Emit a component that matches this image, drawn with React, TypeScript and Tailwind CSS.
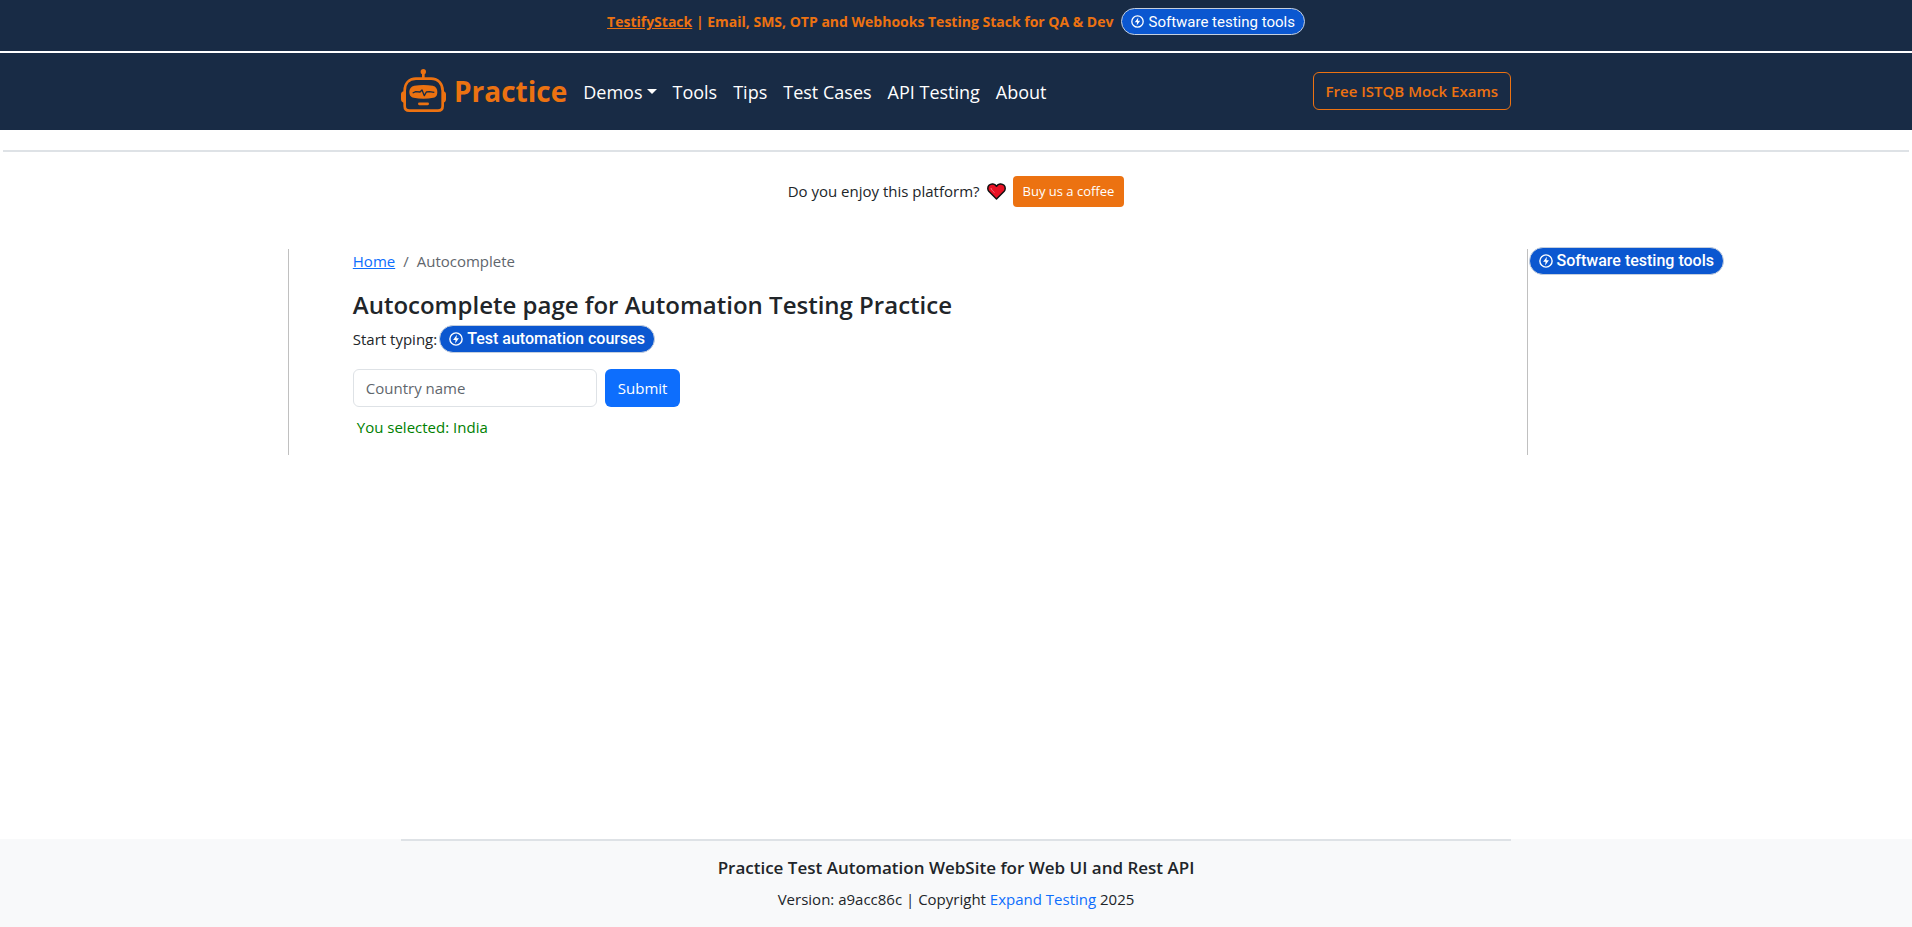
import { useState } from 'react'
import type { FormEvent } from 'react'

const navLinks = ['Tools', 'Tips', 'Test Cases', 'API Testing', 'About']

function BoltIcon({ className }: { className: string }) {
  return (
    <svg viewBox="0 0 24 24" className={className} fill="none" aria-hidden="true">
      <circle cx="12" cy="12" r="10.5" stroke="currentColor" strokeWidth="2.4" />
      <path d="M13.5 4.500 7 13.5h4.200L10.500 19.500 17 10.500h-4.200z" fill="currentColor" />
    </svg>
  )
}

function Pill({ label, large = false }: { label: string; large?: boolean }) {
  return (
    <a
      href="#"
      className={
        large
          ? "inline-flex h-7 items-center gap-1 rounded-full border border-[#c5cfdd] bg-[#0b57d0] px-[9px] font-['Roboto',sans-serif] text-base font-medium whitespace-nowrap text-white"
          : "inline-flex h-[27px] items-center gap-1 rounded-full border border-[#c5cfdd] bg-[#0b57d0] px-[9px] font-['Roboto',sans-serif] text-[15px] whitespace-nowrap text-white"
      }
    >
      <BoltIcon className={large ? 'size-[14px]' : 'size-[13px]'} />
      {label}
    </a>
  )
}

function RobotLogo() {
  return (
    <svg viewBox="33 57 135 129" className="h-[43px] w-[45px]" fill="none" aria-hidden="true">
      <circle cx="100" cy="65" r="8" fill="#ec7211" />
      <path d="M100 68v16" stroke="#ec7211" strokeWidth="8" />
      <path
        d="M78 86h45c22 0 35 15 35 36v46c0 9-5 14-14 14H58c-9 0-14-5-14-14v-46c0-21 12-36 34-36z"
        stroke="#ec7211"
        strokeWidth="8"
      />
      <path d="M42 124c-6 1-9 4-9 9v15c0 6 3 9 9 10zM160 124c5 1 8 4 8 9v15c0 6-3 9-8 10z" fill="#ec7211" />
      <path
        d="M73 107c18-3 37-3 55 0 10 2 14 9 14 18s-2 16-12 18c-19 4-40 4-59 0-10-2-13-9-13-18s5-16 15-18z"
        fill="#ec7211"
      />
      <path d="M68 129l9-4 13 1 6-6 7 17 6-11 9-1 15 2" stroke="#182b45" strokeWidth="4" strokeLinejoin="round" />
      <path d="M88 161.500h25" stroke="#ec7211" strokeWidth="8" strokeLinecap="round" />
    </svg>
  )
}

function Heart() {
  return (
    <svg viewBox="0 0 19 17" className="h-[17px] w-[19px]" role="img" aria-label="heart">
      <path
        d="M9.500 16 1.800 8.300C.4 6.700.5 3.800 2 2.300c2.200-2.100 5.700-1.700 7.500.9 1.800-2.600 5.300-3 7.500-.9 1.500 1.500 1.600 4.400.2 6z"
        fill="#e81224"
        stroke="#111"
        strokeWidth="1.500"
        strokeLinejoin="round"
      />
      <path d="M4 5c.3 1.500 1.500 3 3.500 4.500" stroke="#f4717c" strokeWidth="1" fill="none" />
    </svg>
  )
}

export default function App() {
  const [country, setCountry] = useState('')
  const [selected, setSelected] = useState('India')

  const submit = (event: FormEvent) => {
    event.preventDefault()
    if (country) setSelected(country)
  }

  return (
    <div className="flex min-h-screen flex-col bg-white font-['Open_Sans','Noto_Sans',sans-serif] text-[15px] leading-6 text-[#212529]">
      <div className="flex h-[53px] items-start justify-center gap-2 border-b-2 border-white bg-[#182b45] pt-2">
        <p className="text-[14px] leading-[27px] font-bold text-[#ec7211]">
          <a href="#" className="underline">TestifyStack</a> | Email, SMS, OTP and Webhooks Testing Stack for QA &amp; Dev
        </p>
        <Pill label="Software testing tools" />
      </div>

      <header className="bg-[#182b45]">
        <nav className="mx-auto flex h-[77px] max-w-[1110px] items-center pb-0.5 text-[18px] text-white">
          <a href="#" className="mr-4 flex items-center gap-2 text-[28px] font-bold text-[#ec7211]">
            <RobotLogo />
            Practice
          </a>
          <div className="flex items-center gap-4 pt-0.5">
            <button type="button" className="flex items-center gap-1">
              Demos
              <span className="border-x-[5px] border-t-[5px] border-x-transparent border-t-white" />
            </button>
            {navLinks.map((label) => (
              <a key={label} href="#">{label}</a>
            ))}
          </div>
          <a
            href="#"
            className="ml-auto rounded-md border border-[#ec7211] px-3 py-[6px] text-[15px] leading-6 font-semibold text-[#ec7211]"
          >
            Free ISTQB Mock Exams
          </a>
        </nav>
      </header>

      <hr className="mx-[3px] mt-5 border-t-2 border-[#dee2e6]" />

      <div className="mt-6 flex items-center justify-center gap-[7px]">
        <span className="pb-0.5">Do you enjoy this platform?</span>
        <Heart />
        <a href="#" className="rounded bg-[#ec7211] px-[10px] py-[5px] text-[13px] leading-[21px] text-white">
          Buy us a coffee
        </a>
      </div>

      <div className="mt-[42px] flex">
        <div className="w-[15%]" />
        <main className="ml-px h-[206px] w-[calc(65%-3px)] border-x border-[#c0c0c0] px-16">
          <ol className="flex gap-2 text-[#5f666d]">
            <li><a href="#" className="text-[#0d6efd] underline">Home</a></li>
            <li aria-hidden="true">/</li>
            <li>Autocomplete</li>
          </ol>
          <h1 className="mt-4 text-[24px] leading-8 font-semibold">Autocomplete page for Automation Testing Practice</h1>
          <div className="mt-1 flex items-center gap-0.5">
            <label htmlFor="country">Start typing:</label>
            <Pill label="Test automation courses" large />
          </div>
          <form onSubmit={submit} className="mt-4 flex gap-2">
            <input
              id="country"
              value={country}
              onChange={(event) => setCountry(event.target.value)}
              placeholder="Country name"
              className="h-[38px] w-[244px] rounded-md border border-[#dee2e6] px-3 placeholder:text-[#5f666d]"
            />
            <button type="submit" className="h-[38px] rounded-md bg-[#0d6efd] px-[13px] text-white">
              Submit
            </button>
          </form>
          <p className="mt-2 px-1 text-[#008000]">You selected: {selected}</p>
        </main>
        <aside className="-mt-0.5 flex flex-1 items-start pl-px">
          <Pill label="Software testing tools" large />
        </aside>
      </div>

      <footer className="mt-auto bg-[#f8f9fa] text-center">
        <div className="mx-auto h-[88px] max-w-[1110px] border-t-2 border-[#dee2e6] pt-[15px]">
          <h2 className="text-[17px] leading-6 font-semibold">Practice Test Automation WebSite for Web UI and Rest API</h2>
          <p className="mt-[7px]">
            Version: a9acc86c | Copyright <a href="#" className="text-[#0d6efd]">Expand Testing</a> 2025
          </p>
        </div>
      </footer>
    </div>
  )
}
